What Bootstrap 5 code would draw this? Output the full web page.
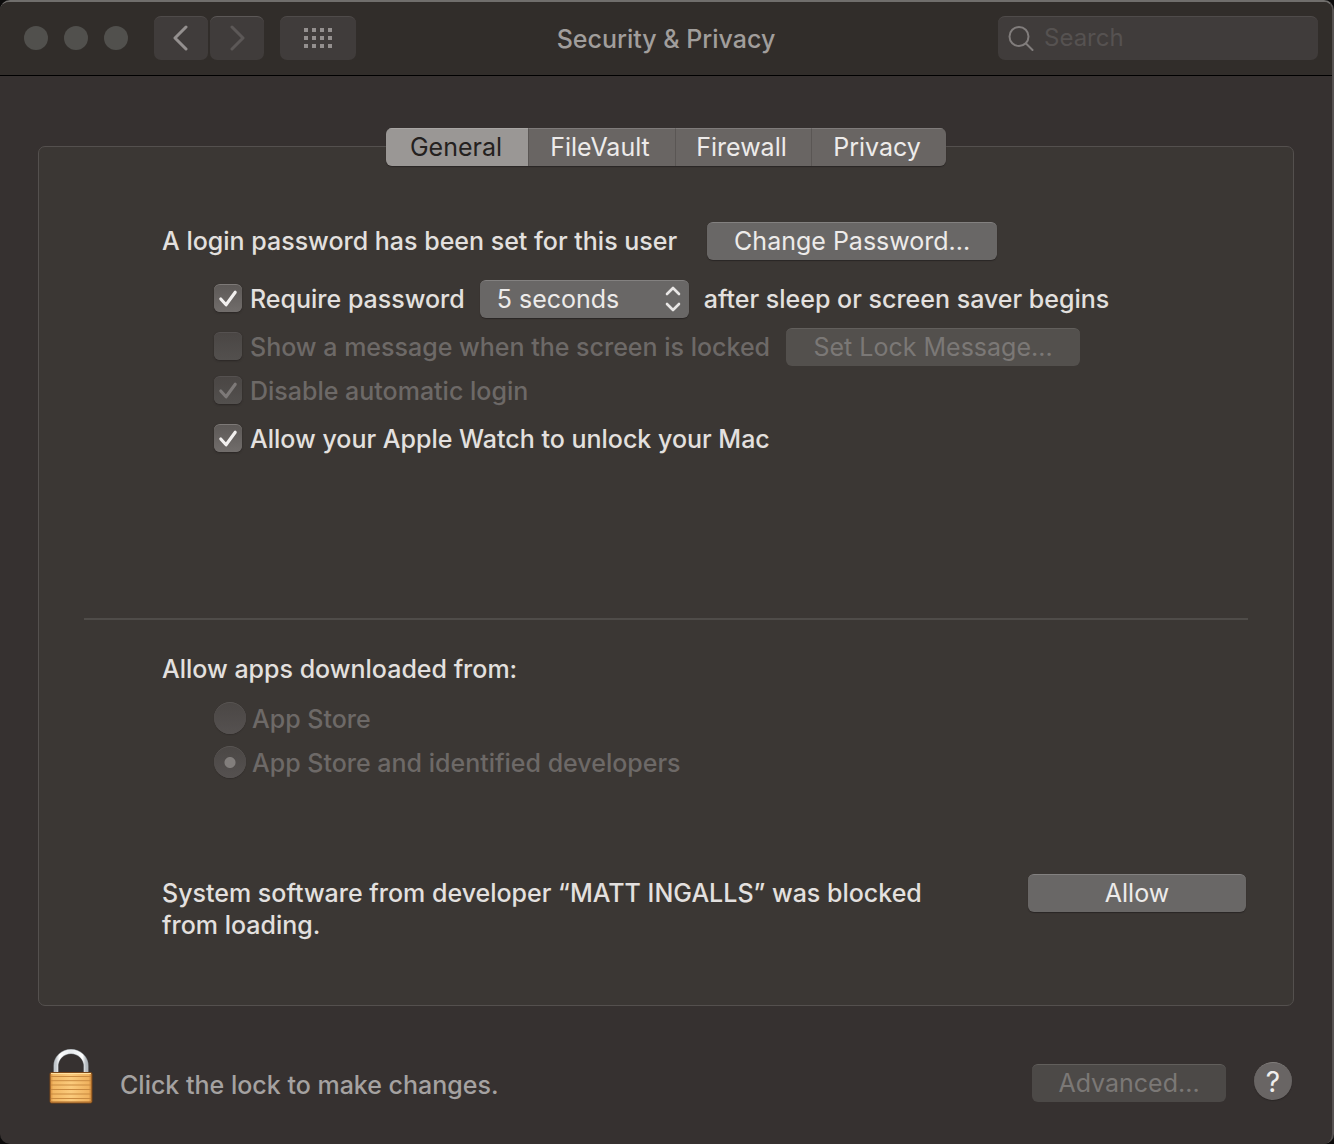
<!DOCTYPE html>
<html lang="en">
<head>
<meta charset="utf-8">
<meta name="viewport" content="width=device-width, initial-scale=1">
<title>Security &amp; Privacy</title>
<link rel="stylesheet" href="https://cdn.jsdelivr.net/npm/bootstrap@5.3.0/dist/css/bootstrap.min.css">
<style>
body { background: #0c0b0b; color: #e3e0df; font-family: Inter, "Liberation Sans", sans-serif; font-size: 25px; line-height: 32px; font-weight: 500; }
.prefs-window { background: #363130; border-top: 2px solid #706e6c; border-right: 2px solid #565251; border-radius: 10px; overflow: hidden; }
.titlebar { background: #312d2a; border-bottom: 1px solid #000; height: 74px; padding: 0 14px 2px; }
.titlebar h1 { font-size: 25px; line-height: 32px; color: #a19e9c; font-weight: 500; padding-top: 2px; }
.lights { gap: 16px; margin-left: 10px; margin-right: 26px; }
.light { width: 24px; height: 24px; border-radius: 50%; background: #51504d; }
.tools { gap: 2px; }
.tool { width: 54px; height: 44px; background: #403c3b; border: 0; border-top: 1px solid #4f4b4a; border-radius: 7px; padding: 0; display: flex; align-items: center; justify-content: center; color: #94908f; }
.tool:disabled { background: #403c3b; color: #5c5857; opacity: 1; }
.tool-wide { width: 76px; margin-left: 14px; }
.search-box { width: 320px; height: 44px; background: #403c3b; border-top: 1px solid #4f4b4a; border-radius: 7px; padding: 0 10px; color: #817d7c; }
.search-box input { background: transparent; border: 0; color: #dddad9; margin-left: 10px; padding: 0; font-size: 24px; line-height: 32px; }
.search-box input::placeholder { color: #565251; opacity: 1; }
.content-area { padding: 52px 38px 36px; }
.tabs { display: grid; grid-template-columns: 142fr 147fr 136fr 135fr; width: 560px; max-width: 100%; position: relative; z-index: 1; margin-bottom: -20px; border-radius: 6px; box-shadow: 0 1px 1px #2a2625; overflow: hidden; }
.tab { height: 38px; border: 0; border-top: 1px solid #7f7b7a; border-left: 1px solid #5a5654; border-radius: 0; padding: 0 4px 0 0; background: #696563; color: #edebea; font-size: 25px; line-height: 35px; }
.tab:first-child { border-left: 0; padding-right: 2px; }
.btn.tab.active { background: #9a9795; border-color: #a9a6a4; color: #242120; }
.panel { background: #3b3734; border: 1px solid #54504e; border-radius: 7px; padding: 75px 45px 64px; }
.settings { padding-left: 78px; }
.nested { padding-left: 52px; }
.push { height: 38px; padding: 0 24px; border: 0; border-top: 1px solid #838180; border-radius: 6px; background: #696766; color: #edebea; font-size: 25px; line-height: 35px; box-shadow: 0 1px 1px #2a2625; white-space: nowrap; }
.push:hover { background: #747271; color: #fff; }
.push:disabled { background: #53504d; border-top: 1px solid #625f5c; color: #7b7876; opacity: 1; box-shadow: none; }
.password-btn { width: 290px; margin-left: 30px; }
.lock-btn { width: 294px; margin-left: 16px; }
.allow-btn { width: 218px; margin-right: 2px; }
.advanced-btn { width: 194px; margin-top: 12px; }
.push.advanced-btn:disabled { background: #4c4947; }
.delay { width: 209px; height: 38px; margin: 0 15px; padding: 0 38px 0 17px; border: 0; border-top: 1px solid #838180; border-radius: 6px; color: #edebea; font-size: 25px; line-height: 35px; background: #696766 url("data:image/svg+xml,%3Csvg xmlns='http://www.w3.org/2000/svg' width='16' height='26' fill='none' stroke='%23e8e6e5' stroke-width='2.6' stroke-linecap='round' stroke-linejoin='round'%3E%3Cpath d='M2 8l6-6 6 6M2 18l6 6 6-6'/%3E%3C/svg%3E") no-repeat right 8px top 5px / 16px 26px; box-shadow: 0 1px 1px #2a2625; }
.form-check-input.tick { width: 28px; height: 28px; margin: 0 0 2px; border: 0; border-top: 1px solid #7d7977; border-radius: 6px; background-color: #64605e; background-image: linear-gradient(#5d5957, #716d6b); background-size: 100% 100%; box-shadow: 0 1px 2px #2a2625; flex: none; }
.form-check-input.tick:checked { background-color: #64605e; background-image: url("data:image/svg+xml,%3Csvg xmlns='http://www.w3.org/2000/svg' viewBox='0 0 28 28' fill='none' stroke='%23f2f0ef' stroke-width='3.2' stroke-linecap='round' stroke-linejoin='round'%3E%3Cpath d='M6.500 14.500l5.500 6L21.500 7.500'/%3E%3C/svg%3E"), linear-gradient(#5d5957, #716d6b); }
.form-check-input.tick:disabled { opacity: 1; border-top-color: #555150; background-color: #4f4b49; background-image: linear-gradient(#4a4644, #53504e); }
.form-check-input.tick:checked:disabled { background-image: url("data:image/svg+xml,%3Csvg xmlns='http://www.w3.org/2000/svg' viewBox='0 0 28 28' fill='none' stroke='%237d7978' stroke-width='3.2' stroke-linecap='round' stroke-linejoin='round'%3E%3Cpath d='M6.500 14.500l5.500 6L21.500 7.500'/%3E%3C/svg%3E"), linear-gradient(#4a4644, #53504e); }
.form-check-input.dot { width: 32px; height: 32px; margin: 0 0 2px; border: 0; border-top: 1px solid #595553; background-color: #504c4a; background-image: linear-gradient(#4b4745, #555150); background-size: 100% 100%; box-shadow: 0 1px 1px #322e2c; flex: none; }
.form-check-input.dot:disabled { opacity: 1; }
.form-check-input.dot:checked { background-color: #504c4a; background-image: radial-gradient(circle, #827e7c 5px, transparent 6px), linear-gradient(#4b4745, #555150); }
.tick + label { padding-left: 8px; }
.dot + label { padding-left: 6px; }
.form-check-input:disabled + label { color: #6d6967; opacity: 1; }
.opt-row { min-height: 38px; }
.first-opt { margin-top: 20px; }
.second-opt { margin-top: 10px; }
.third-opt { margin-top: 6px; }
.last-opt { margin-top: 10px; }
.divider { height: 2px; background: #4f4c49; border: 0; opacity: 1; margin: 160px 0 33px; }
.radios { margin-top: 17px; gap: 10px; }
.blocked { margin-top: 94px; }
.blocked p { max-width: 790px; padding-top: 3px; }
.footer-bar { margin-top: 42px; padding: 0 2px 0 10px; }
.footer-bar p { color: #a5a2a1; padding-top: 16px; margin-left: 26px; }
.help { width: 38px; height: 38px; margin-left: 28px; margin-top: 8px; padding: 0; border: 0; border-top: 1px solid #827e7c; border-radius: 50%; background: #696564; color: #f0eeed; font-size: 28px; line-height: 36px; font-weight: 400; box-shadow: 0 1px 1px #2a2625; }
</style>
<script src="https://cdn.jsdelivr.net/npm/bootstrap@5.3.0/dist/js/bootstrap.bundle.min.js"></script>
</head>
<body>
<div class="prefs-window min-vh-100 d-flex flex-column">
  <header class="titlebar d-flex align-items-center">
    <div class="d-flex align-items-center flex-fill w-50">
      <div class="lights d-flex">
        <span class="light"></span><span class="light"></span><span class="light"></span>
      </div>
      <div class="tools d-flex">
        <button class="btn tool" type="button" aria-label="Back">
          <svg width="16" height="26" fill="none" stroke="currentColor" stroke-width="3" stroke-linecap="round" stroke-linejoin="round"><path d="M13 2 2 13l11 11"/></svg>
        </button>
        <button class="btn tool" type="button" aria-label="Forward" disabled>
          <svg width="16" height="26" fill="none" stroke="currentColor" stroke-width="3" stroke-linecap="round" stroke-linejoin="round"><path d="m3 2 11 11L3 24"/></svg>
        </button>
        <button class="btn tool tool-wide" type="button" aria-label="Show all">
          <svg width="28" height="20" fill="currentColor"><path d="M0 0h4v4H0zM8 0h4v4H8zM16 0h4v4h-4zM24 0h4v4h-4zM0 8h4v4H0zM8 8h4v4H8zM16 8h4v4h-4zM24 8h4v4h-4zM0 16h4v4H0zM8 16h4v4H8zM16 16h4v4h-4zM24 16h4v4h-4z"/></svg>
        </button>
      </div>
    </div>
    <h1 class="m-0 text-nowrap">Security &amp; Privacy</h1>
    <div class="d-flex justify-content-end flex-fill w-50">
      <div class="search-box d-flex align-items-center">
        <svg class="flex-shrink-0" width="26" height="26" fill="none" stroke="currentColor" stroke-width="2" stroke-linecap="round"><circle cx="11" cy="11.500" r="9.500"/><path d="m18 18.500 6.500 6.500"/></svg>
        <input class="form-control shadow-none" type="search" placeholder="Search" aria-label="Search">
      </div>
    </div>
  </header>

  <div class="content-area flex-grow-1">
    <nav class="tabs mx-auto" role="tablist" aria-label="Sections">
      <button class="btn tab active" type="button" role="tab" aria-selected="true">General</button>
      <button class="btn tab" type="button" role="tab" aria-selected="false">FileVault</button>
      <button class="btn tab" type="button" role="tab" aria-selected="false">Firewall</button>
      <button class="btn tab" type="button" role="tab" aria-selected="false">Privacy</button>
    </nav>

    <main class="panel">
      <section class="settings">
        <div class="d-flex align-items-center">
          <span>A login password has been set for this user</span>
          <button class="btn push password-btn" type="button">Change Password...</button>
        </div>
        <div class="nested">
          <div class="opt-row first-opt d-flex align-items-center">
            <input class="form-check-input tick" type="checkbox" id="require" checked>
            <label for="require">Require password</label>
            <select class="form-select delay" id="delay" aria-label="Password delay"><option>5 seconds</option><option>1 minute</option><option>5 minutes</option></select>
            <label for="delay">after sleep or screen saver begins</label>
          </div>
          <div class="opt-row second-opt d-flex align-items-center">
            <input class="form-check-input tick" type="checkbox" id="message" disabled>
            <label for="message">Show a message when the screen is locked</label>
            <button class="btn push lock-btn" type="button" disabled>Set Lock Message...</button>
          </div>
          <div class="opt-row third-opt d-flex align-items-center">
            <input class="form-check-input tick" type="checkbox" id="autologin" checked disabled>
            <label for="autologin">Disable automatic login</label>
          </div>
          <div class="opt-row last-opt d-flex align-items-center">
            <input class="form-check-input tick" type="checkbox" id="watch" checked>
            <label for="watch">Allow your Apple Watch to unlock your Mac</label>
          </div>
        </div>
      </section>

      <hr class="divider">

      <section class="settings">
        <div id="sources">Allow apps downloaded from:</div>
        <div class="nested radios d-flex flex-column" role="radiogroup" aria-labelledby="sources">
          <div class="d-flex align-items-center">
            <input class="form-check-input dot" type="radio" name="source" id="store" disabled>
            <label for="store">App Store</label>
          </div>
          <div class="d-flex align-items-center">
            <input class="form-check-input dot" type="radio" name="source" id="developers" checked disabled>
            <label for="developers">App Store and identified developers</label>
          </div>
        </div>
        <div class="blocked d-flex justify-content-between align-items-start">
          <p class="m-0">System software from developer “MATT INGALLS” was blocked from loading.</p>
          <button class="btn push allow-btn" type="button">Allow</button>
        </div>
      </section>
    </main>

    <footer class="footer-bar d-flex align-items-center">
      <svg class="flex-shrink-0" width="46" height="58" viewBox="0 0 46 58" role="img" aria-label="Locked">
        <defs>
          <linearGradient id="steel" x1="0" x2="1"><stop offset="0" stop-color="#c3c8cd"/><stop offset=".12" stop-color="#fff"/><stop offset=".5" stop-color="#e6eaed"/><stop offset=".88" stop-color="#fff"/><stop offset="1" stop-color="#b4babf"/></linearGradient>
          <linearGradient id="brass" x1="0" x2="1"><stop offset="0" stop-color="#d98f3c"/><stop offset=".08" stop-color="#f2b763"/><stop offset=".5" stop-color="#fbcb7c"/><stop offset=".92" stop-color="#f0b25e"/><stop offset="1" stop-color="#c47c30"/></linearGradient>
        </defs>
        <path d="M8 25V18a15 14.500 0 0 1 30 0v7" fill="none" stroke="#8b9094" stroke-width="5.200"/>
        <path d="M8 25V18a15 14.500 0 0 1 30 0v7" fill="none" stroke="url(#steel)" stroke-width="4"/>
        <rect x="2" y="24.500" width="42" height="30.500" rx="1.500" fill="url(#brass)" stroke="#794719"/>
        <path d="M3 25.500h40" stroke="#ffe0a0" stroke-width="1.200"/>
        <path d="M3 28.500h40M3 32.700h40M3 37h40M3 41.500h40M3 46h40M3 50.500h40" stroke="#c98a40" stroke-width="1"/>
        <path d="M3 54h40" stroke="#a86524" stroke-width="1"/>
      </svg>
      <p class="mb-0 me-auto">Click the lock to make changes.</p>
      <button class="btn push advanced-btn" type="button" disabled>Advanced...</button>
      <button class="btn help" type="button" aria-label="Help">?</button>
    </footer>
  </div>
</div>
</body>
</html>
